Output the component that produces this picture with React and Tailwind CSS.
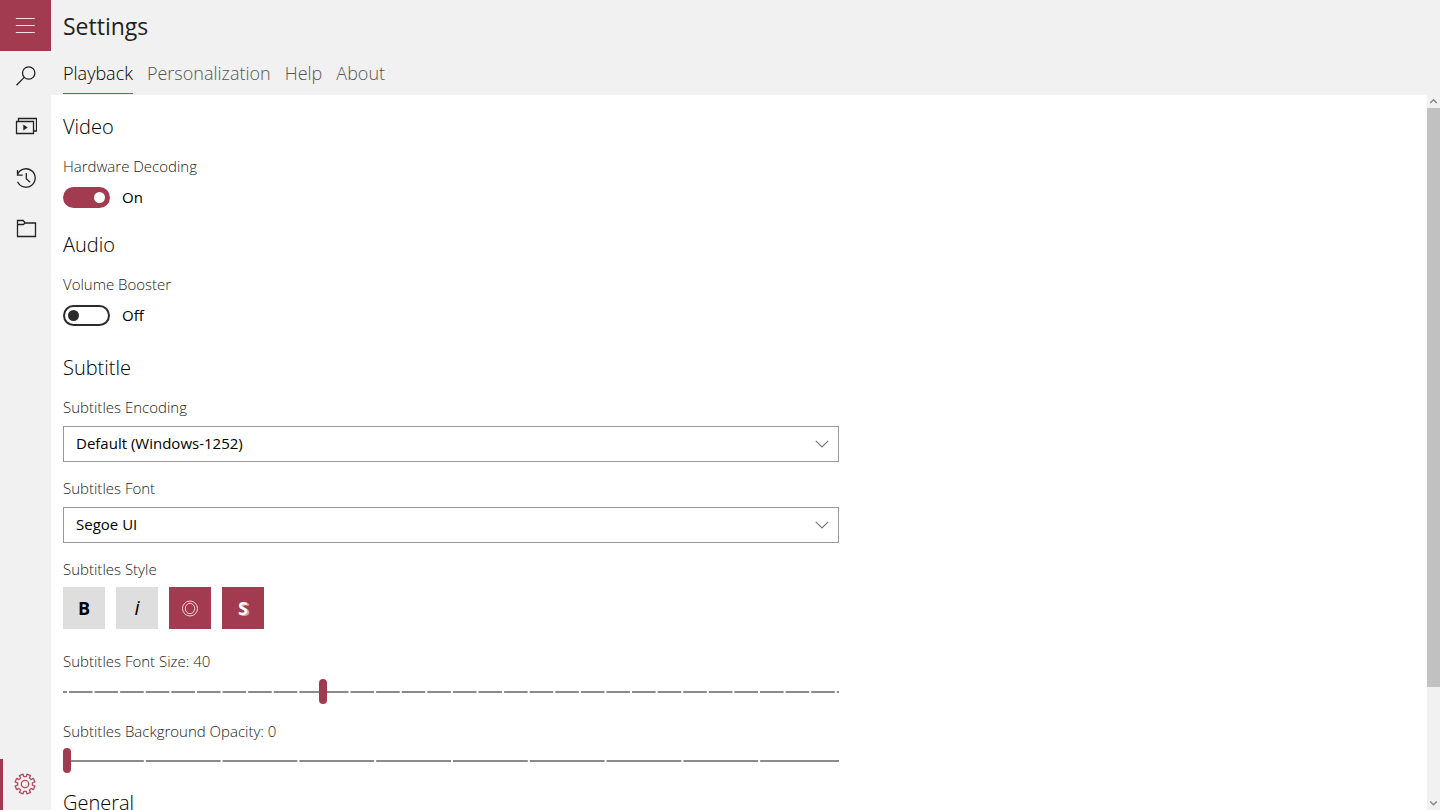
import { useState } from "react";

function Icon({ children, className = "" }) {
  return (
    <svg
      viewBox="0 0 22 22"
      className={`size-[22px] ${className}`}
      fill="none"
      stroke="currentColor"
      strokeWidth="1.3"
      aria-hidden="true"
    >
      {children}
    </svg>
  );
}

function NavButton({ label, className = "", children }) {
  return (
    <button
      type="button"
      aria-label={label}
      className={`flex h-[51px] w-full shrink-0 items-center justify-center pb-[2px] ${className}`}
    >
      {children}
    </button>
  );
}

const GEAR_TEETH = 8;

function gearPath() {
  const points = [];
  for (let i = 0; i < GEAR_TEETH; i++) {
    const base = (i * 360) / GEAR_TEETH;
    [
      [-13, 7.5],
      [-11, 10.1],
      [11, 10.1],
      [13, 7.5],
    ].forEach(([offset, r]) => {
      const a = ((base + offset - 67.5) * Math.PI) / 180;
      points.push(`${(11 + r * Math.cos(a)).toFixed(2)} ${(11 + r * Math.sin(a)).toFixed(2)}`);
    });
  }
  return `M${points.join("L")}Z`;
}

function Sidebar() {
  return (
    <nav aria-label="Main" className="flex w-[51px] shrink-0 flex-col bg-[#f1f1f1] text-[#222]">
      <NavButton label="Menu" className="bg-[#a33b50] text-[#f3dfe3]">
        <Icon>
          <path d="M.8 4.500h19M.8 11.500h19M.8 18.500h19" strokeWidth="1.2" />
        </Icon>
      </NavButton>
      <NavButton label="Search">
        <Icon>
          <circle cx="13.7" cy="8" r="6.2" />
          <path d="M9.2 12.4L1.500 20.2" />
        </Icon>
      </NavButton>
      <NavButton label="Videos">
        <Icon>
          <path d="M1.500 5.500h17v12h-17zM3.500 5.300V2.500h18v12.500h-2.800" />
          <path d="M8.300 8.600v5.800l4.400-2.900z" fill="currentColor" stroke="none" />
        </Icon>
      </NavButton>
      <NavButton label="History">
        <Icon>
          <path d="M2.500 7.500a9.200 9.200 0 1 1 .1 7.200M2.500 3v5.200h5.200M11.300 6v5.800l3.800 3.500" />
        </Icon>
      </NavButton>
      <NavButton label="Folders">
        <Icon>
          <path d="M2.500 18.500v-16h5.700l2 2.500h10.300v13.500zM2.500 6.500h5.700l2-1.500" />
        </Icon>
      </NavButton>
      <div className="grow" />
      <NavButton
        label="Settings"
        className="border-l-[3px] border-[#a33b50] pr-1 text-[#b44b60]"
      >
        <Icon>
          <path d={gearPath()} strokeLinejoin="round" />
          <circle cx="11" cy="11" r="3.7" />
        </Icon>
      </NavButton>
    </nav>
  );
}

function Header() {
  return (
    <header className="flex h-[95px] shrink-0 flex-col bg-[#f1f1f1] pl-3">
      <h1 className="pt-[9px] text-[23px] leading-[34px] text-[#222]">Settings</h1>
      <nav
        aria-label="Settings sections"
        className="mt-[15px] flex gap-[14px] text-[18px] leading-[30px] font-light text-[#555]"
      >
        <a
          href="#playback"
          aria-current="page"
          className="h-9 border-b border-b-[#b5455c] text-black"
        >
          Playback
        </a>
        <a href="#personalization">Personalization</a>
        <a href="#help">Help</a>
        <a href="#about">About</a>
      </nav>
    </header>
  );
}

function Heading({ className = "", children }) {
  return (
    <h2 className={`text-[20px] leading-[28px] font-light text-black ${className}`}>{children}</h2>
  );
}

const labelClass = "block text-[15px] leading-[20px] font-light text-[#222]";

function Toggle({ id, label, initial }) {
  const [on, setOn] = useState(initial);
  return (
    <div className="mt-[15px]">
      <label htmlFor={id} className={labelClass}>
        {label}
      </label>
      <div className="mt-[11px] flex h-[21px] items-center gap-3">
        <input
          id={id}
          type="checkbox"
          role="switch"
          checked={on}
          onChange={(e) => setOn(e.target.checked)}
          className="flex h-[21px] w-[47px] appearance-none items-center rounded-full border-2 border-[#2b2b2b] px-[3px] before:size-[11px] before:rounded-full before:bg-[#2b2b2b] checked:justify-end checked:border-[#a33b50] checked:bg-[#a33b50] checked:before:bg-white"
        />
        <span className="pb-[2px] text-[15px] leading-[20px] text-black">{on ? "On" : "Off"}</span>
      </div>
    </div>
  );
}

function Dropdown({ id, label, options, className }) {
  return (
    <div className={className}>
      <label htmlFor={id} className={labelClass}>
        {label}
      </label>
      <div className="relative mt-[9px]">
        <select
          id={id}
          className="h-9 w-full appearance-none border border-[#999] bg-white px-3 pb-[2px] text-[15px] text-black"
        >
          {options.map((o) => (
            <option key={o}>{o}</option>
          ))}
        </select>
        <svg
          viewBox="0 0 14 8"
          className="pointer-events-none absolute top-[14px] right-[10px] h-2 w-[14px]"
          fill="none"
          stroke="#777"
          strokeWidth="1.2"
          aria-hidden="true"
        >
          <path d="M.8 .8L7 7l6.200-6.200" />
        </svg>
      </div>
    </div>
  );
}

function StyleButton({ label, initial, children }) {
  const [on, setOn] = useState(initial);
  return (
    <button
      type="button"
      aria-label={label}
      aria-pressed={on}
      onClick={() => setOn(!on)}
      className="flex size-[42px] items-center justify-center bg-[#dedede] text-[18px] leading-[24px] text-black aria-pressed:bg-[#a33b50] aria-pressed:text-white"
    >
      {children}
    </button>
  );
}

const sliderClass =
  "block h-[25px] w-full appearance-none [&::-webkit-slider-thumb]:h-[25px] [&::-webkit-slider-thumb]:w-2 [&::-webkit-slider-thumb]:appearance-none [&::-webkit-slider-thumb]:rounded-full [&::-webkit-slider-thumb]:bg-[#a33b50]";

function Slider({ id, label, initial, min, max, step, ticks, className }) {
  const [value, setValue] = useState(initial);
  return (
    <div className={className}>
      <label htmlFor={id} className={labelClass}>
        {label}: {value}
      </label>
      <input
        id={id}
        type="range"
        min={min}
        max={max}
        step={step}
        value={value}
        onChange={(e) => setValue(Number(e.target.value))}
        className={`${sliderClass} ${ticks}`}
      />
    </div>
  );
}

function Scrollbar() {
  return (
    <div className="flex w-[13px] shrink-0 flex-col bg-[#f1f1f1] text-[#888]" aria-hidden="true">
      <svg viewBox="0 0 13 13" className="h-[13px] w-full" fill="none" stroke="currentColor">
        <path d="M3.200 8L6.500 4.700L9.800 8" strokeWidth="1.500" />
      </svg>
      <div className="h-[81%] bg-[#c1c1c1]" />
      <div className="grow" />
      <svg viewBox="0 0 13 13" className="h-[13px] w-full" fill="none" stroke="currentColor">
        <path d="M3.200 4.500L6.500 7.800L9.800 4.500" strokeWidth="1.500" />
      </svg>
    </div>
  );
}

export default function App() {
  return (
    <div className="flex h-screen overflow-hidden bg-white font-['Open_Sans','Noto_Sans',sans-serif]">
      <Sidebar />
      <div className="flex min-w-0 grow flex-col">
        <Header />
        <div className="flex min-h-0 grow">
          <main className="min-w-0 grow overflow-hidden pt-[18px] pl-3">
            <div className="w-full max-w-[776px]">
              <Heading>Video</Heading>
              <Toggle id="hardware-decoding" label="Hardware Decoding" initial={true} />

              <Heading className="mt-[23px]">Audio</Heading>
              <Toggle id="volume-booster" label="Volume Booster" initial={false} />

              <Heading className="mt-7">Subtitle</Heading>
              <Dropdown
                id="encoding"
                label="Subtitles Encoding"
                options={["Default (Windows-1252)", "UTF-8"]}
                className="mt-[15px]"
              />
              <Dropdown
                id="font"
                label="Subtitles Font"
                options={["Segoe UI", "Arial"]}
                className="mt-4"
              />
              <div role="group" aria-labelledby="style-label" className="mt-4">
                <span id="style-label" className={labelClass}>
                  Subtitles Style
                </span>
                <div className="mt-2 flex gap-[11px]">
                  <StyleButton label="Bold" initial={false}>
                    <span className="font-bold">B</span>
                  </StyleButton>
                  <StyleButton label="Italic" initial={false}>
                    <span className="text-[20px] italic">i</span>
                  </StyleButton>
                  <StyleButton label="Outline" initial={true}>
                    <svg
                      viewBox="0 0 18 18"
                      className="size-[18px]"
                      fill="none"
                      stroke="#f0d5da"
                      aria-hidden="true"
                    >
                      <ellipse cx="9" cy="9.500" rx="7.500" ry="7.500" />
                      <ellipse cx="9" cy="9.500" rx="4.700" ry="5.200" />
                    </svg>
                  </StyleButton>
                  <StyleButton label="Shadow" initial={true}>
                    <span className="font-bold [text-shadow:2px_1px_0_#d3a0aa]">S</span>
                  </StyleButton>
                </div>
              </div>
              <Slider
                id="font-size"
                label="Subtitles Font Size"
                initial={40}
                min={20}
                max={80}
                step={2}
                className="mt-[22px] space-y-2"
                ticks="bg-[linear-gradient(to_right,#fff_2px,#8b8b8b_2px)] bg-[length:calc((100%-8px)/30)_2px] bg-[position:4px_center] bg-repeat-x"
              />
              <Slider
                id="opacity"
                label="Subtitles Background Opacity"
                initial={0}
                min={0}
                max={100}
                step={10}
                className="mt-[17px] space-y-[7px]"
                ticks="bg-[linear-gradient(#8b8b8b,#8b8b8b),linear-gradient(to_right,#fff_2px,#8b8b8b_2px)] bg-[length:10px_2px,calc((100%-8px)/10)_2px] bg-[position:right_center,4px_center] [background-repeat:no-repeat,repeat-x]"
              />

              <Heading className="mt-4">General</Heading>
            </div>
          </main>
          <Scrollbar />
        </div>
      </div>
    </div>
  );
}
